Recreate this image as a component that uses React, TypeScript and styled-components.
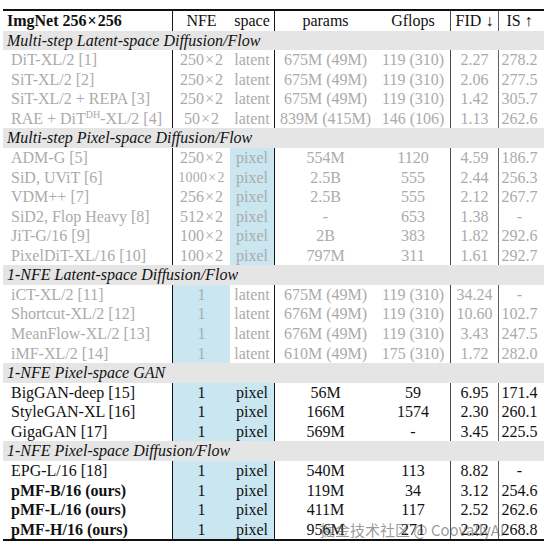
import React from "react";
import styled, { createGlobalStyle, css } from "styled-components";

const GlobalStyle = createGlobalStyle`
  html, body { margin: 0; padding: 0; background: #fff; }
  body { font-family: "Liberation Serif", "Times New Roman", serif; }
`;

const ROW_H = 19.57;

const Page = styled.div`
  width: 549px;
  height: 551px;
  box-sizing: border-box;
  padding: 9px 5px 0 3px;
  background: #fff;
  overflow: hidden;
`;

const Frame = styled.div`
  position: relative;
  width: 541px;
  border-top: 2px solid #111;
  border-bottom: 2px solid #111;
`;

const Table = styled.table`
  width: 541px;
  table-layout: fixed;
  border-collapse: separate;
  border-spacing: 0;
  font-size: 16px;
  color: #111;
`;

const Col = styled.col<{ $w: number }>`
  width: ${(p) => p.$w}px;
`;

type Rule = "dark" | "mid" | "light";
const ruleColor: Record<Rule, string> = {
  dark: "#161616",
  mid: "#4a4a4a",
  light: "#5e5e5e",
};

const Cell = styled.td<{
  $align?: "left" | "center";
  $fill?: boolean;
  $rule?: Rule;
  $muted?: boolean;
  $bold?: boolean;
  $padL?: number;
  $padR?: number;
  $small?: boolean;
}>`
  height: ${ROW_H}px;
  line-height: ${ROW_H}px;
  padding: 0 ${(p) => p.$padR ?? 0}px 0 ${(p) => p.$padL ?? 0}px;
  white-space: nowrap;
  overflow: visible;
  vertical-align: middle;
  text-align: ${(p) => p.$align ?? "center"};
  background: ${(p) => (p.$fill ? "#c9e6f1" : "transparent")};
  color: ${(p) => (p.$muted ? "#ababab" : "#111")};
  font-weight: ${(p) => (p.$bold ? 700 : 400)};
  ${(p) =>
    p.$rule &&
    css`
      border-left: 1px solid ${ruleColor[p.$rule]};
    `}
  ${(p) =>
    p.$small &&
    css`
      font-size: 14px;
      letter-spacing: 0.3px;
    `}
`;

const HeadCell = styled(Cell).attrs({ as: "th" })``;

const SectionCell = styled.td`
  height: ${ROW_H}px;
  line-height: ${ROW_H}px;
  padding: 0 0 0 4px;
  background: #e5e5e5;
  font-style: italic;
  color: #111;
  white-space: nowrap;
  text-align: left;
`;

const Sup = styled.sup`
  font-size: 10px;
  line-height: 0;
  vertical-align: 6px;
`;

const Times = styled.span`
  margin: 0 1px;
`;

const Watermark = styled.div`
  position: absolute;
  left: 317px;
  bottom: 0;
  height: ${ROW_H}px;
  line-height: ${ROW_H}px;
  font-family: "Noto Sans CJK SC", "Noto Sans", sans-serif;
  font-size: 15px;
  color: rgba(85, 85, 85, 0.6);
  white-space: nowrap;
  pointer-events: none;
`;

type Row = {
  name: React.ReactNode;
  nfe: string;
  space: "latent" | "pixel";
  params: string;
  gflops: string;
  fid: string;
  is: string;
  bold?: boolean;
  smallNfe?: boolean;
};

type Section = { title: string; muted: boolean; rows: Row[] };

const nfe = (n: string) => (
  <>
    {n}
    <Times>×</Times>2
  </>
);

const sections: Section[] = [
  {
    title: "Multi-step Latent-space Diffusion/Flow",
    muted: true,
    rows: [
      { name: "DiT-XL/2 [1]", nfe: "250", space: "latent", params: "675M (49M)", gflops: "119 (310)", fid: "2.27", is: "278.2" },
      { name: "SiT-XL/2 [2]", nfe: "250", space: "latent", params: "675M (49M)", gflops: "119 (310)", fid: "2.06", is: "277.5" },
      { name: "SiT-XL/2 + REPA [3]", nfe: "250", space: "latent", params: "675M (49M)", gflops: "119 (310)", fid: "1.42", is: "305.7" },
      {
        name: (
          <>
            RAE + DiT<Sup>DH</Sup>-XL/2 [4]
          </>
        ),
        nfe: "50",
        space: "latent",
        params: "839M (415M)",
        gflops: "146 (106)",
        fid: "1.13",
        is: "262.6",
      },
    ],
  },
  {
    title: "Multi-step Pixel-space Diffusion/Flow",
    muted: true,
    rows: [
      { name: "ADM-G [5]", nfe: "250", space: "pixel", params: "554M", gflops: "1120", fid: "4.59", is: "186.7" },
      { name: "SiD, UViT [6]", nfe: "1000", smallNfe: true, space: "pixel", params: "2.5B", gflops: "555", fid: "2.44", is: "256.3" },
      { name: "VDM++ [7]", nfe: "256", space: "pixel", params: "2.5B", gflops: "555", fid: "2.12", is: "267.7" },
      { name: "SiD2, Flop Heavy [8]", nfe: "512", space: "pixel", params: "-", gflops: "653", fid: "1.38", is: "-" },
      { name: "JiT-G/16 [9]", nfe: "100", space: "pixel", params: "2B", gflops: "383", fid: "1.82", is: "292.6" },
      { name: "PixelDiT-XL/16 [10]", nfe: "100", space: "pixel", params: "797M", gflops: "311", fid: "1.61", is: "292.7" },
    ],
  },
  {
    title: "1-NFE Latent-space Diffusion/Flow",
    muted: true,
    rows: [
      { name: "iCT-XL/2 [11]", nfe: "1", space: "latent", params: "675M (49M)", gflops: "119 (310)", fid: "34.24", is: "-" },
      { name: "Shortcut-XL/2 [12]", nfe: "1", space: "latent", params: "676M (49M)", gflops: "119 (310)", fid: "10.60", is: "102.7" },
      { name: "MeanFlow-XL/2 [13]", nfe: "1", space: "latent", params: "676M (49M)", gflops: "119 (310)", fid: "3.43", is: "247.5" },
      { name: "iMF-XL/2 [14]", nfe: "1", space: "latent", params: "610M (49M)", gflops: "175 (310)", fid: "1.72", is: "282.0" },
    ],
  },
  {
    title: "1-NFE Pixel-space GAN",
    muted: false,
    rows: [
      { name: "BigGAN-deep [15]", nfe: "1", space: "pixel", params: "56M", gflops: "59", fid: "6.95", is: "171.4" },
      { name: "StyleGAN-XL [16]", nfe: "1", space: "pixel", params: "166M", gflops: "1574", fid: "2.30", is: "260.1" },
      { name: "GigaGAN [17]", nfe: "1", space: "pixel", params: "569M", gflops: "-", fid: "3.45", is: "225.5" },
    ],
  },
  {
    title: "1-NFE Pixel-space Diffusion/Flow",
    muted: false,
    rows: [
      { name: "EPG-L/16 [18]", nfe: "1", space: "pixel", params: "540M", gflops: "113", fid: "8.82", is: "-" },
      { name: "pMF-B/16 (ours)", bold: true, nfe: "1", space: "pixel", params: "119M", gflops: "34", fid: "3.12", is: "254.6" },
      { name: "pMF-L/16 (ours)", bold: true, nfe: "1", space: "pixel", params: "411M", gflops: "117", fid: "2.52", is: "262.6" },
      { name: "pMF-H/16 (ours)", bold: true, nfe: "1", space: "pixel", params: "956M", gflops: "271", fid: "2.22", is: "268.8" },
    ],
  },
];

const widths = [169, 58, 44, 102, 74, 48, 46];

export default function App() {
  return (
    <Page>
      <GlobalStyle />
      <Frame>
        <Table>
          <colgroup>
            {widths.map((w, i) => (
              <Col key={i} $w={w} />
            ))}
          </colgroup>
          <thead>
            <tr>
              <HeadCell $align="left" $padL={4} $bold>
                ImgNet 256<Times>×</Times>256
              </HeadCell>
              <HeadCell $rule="dark">NFE</HeadCell>
              <HeadCell>space</HeadCell>
              <HeadCell $rule="dark">params</HeadCell>
              <HeadCell>Gflops</HeadCell>
              <HeadCell $rule="mid">FID ↓</HeadCell>
              <HeadCell $rule="light" $padR={4}>
                IS ↑
              </HeadCell>
            </tr>
          </thead>
          <tbody>
            {sections.map((s) => (
              <React.Fragment key={s.title}>
                <tr>
                  <SectionCell colSpan={7}>{s.title}</SectionCell>
                </tr>
                {s.rows.map((r, i) => (
                  <tr key={i}>
                    <Cell $align="left" $padL={8} $muted={s.muted} $bold={r.bold}>
                      {r.name}
                    </Cell>
                    <Cell $rule="dark" $muted={s.muted} $fill={r.nfe === "1"} $small={r.smallNfe}>
                      {r.nfe === "1" ? "1" : nfe(r.nfe)}
                    </Cell>
                    <Cell $muted={s.muted} $fill={r.space === "pixel"}>
                      {r.space}
                    </Cell>
                    <Cell $rule="dark" $muted={s.muted}>
                      {r.params}
                    </Cell>
                    <Cell $muted={s.muted}>{r.gflops}</Cell>
                    <Cell $rule="mid" $muted={s.muted}>
                      {r.fid}
                    </Cell>
                    <Cell $rule="light" $muted={s.muted} $padR={4}>
                      {r.is}
                    </Cell>
                  </tr>
                ))}
              </React.Fragment>
            ))}
          </tbody>
        </Table>
        <Watermark>掘金技术社区 @ CoovallyAI</Watermark>
      </Frame>
    </Page>
  );
}
